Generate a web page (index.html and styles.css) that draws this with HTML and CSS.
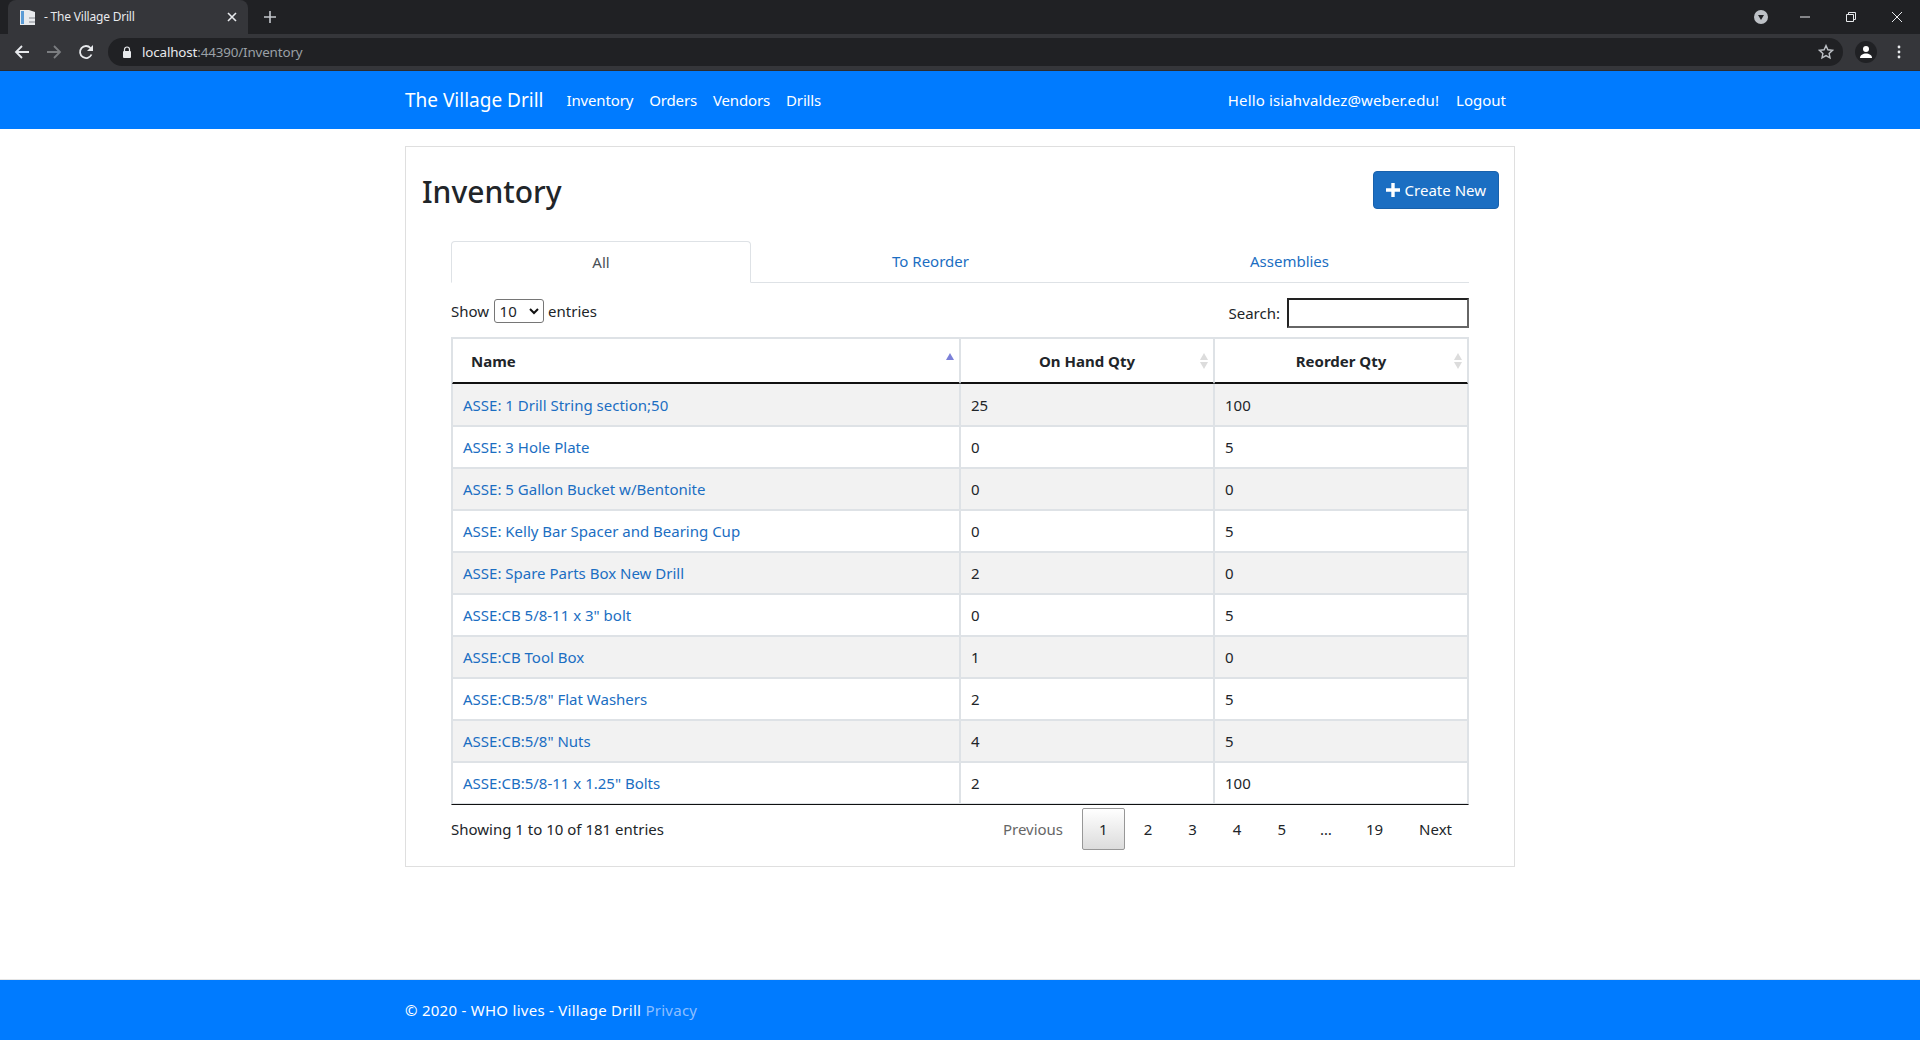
FILE: index.html
```html
<!DOCTYPE html>
<html lang="en">
<head>
<meta charset="utf-8">
<title>The Village Drill</title>
<link rel="stylesheet" href="styles.css">
</head>
<body>
<div class="chrome">
  <div class="tabstrip">
    <div class="tab">
      <svg class="favicon" width="16" height="16" viewBox="0 0 16 16"><path d="M0 1h9l6 2v13H0z" fill="#e8eaed"/><path d="M1 2h3v13H1z" fill="#5b9bd5"/><path d="M9 8h6v2H9zM9 12h6v2H9z" fill="#b5b8bd"/></svg>
      <span class="tab-title">- The Village Drill</span>
      <svg class="tab-x" width="10" height="10" viewBox="0 0 10 10"><path d="M1 1l8 8M9 1l-8 8" stroke="#e8eaed" stroke-width="1.6"/></svg>
    </div>
    <svg class="newtab" width="12" height="12" viewBox="0 0 12 12"><path d="M6 0v12M0 6h12" stroke="#c4c7cc" stroke-width="1.6"/></svg>
    <div class="spacer"></div>
    <svg class="media" width="14" height="14" viewBox="0 0 14 14"><circle cx="7" cy="7" r="7" fill="#bdc1c6"/><path d="M4 5h6L7 10z" fill="#202124"/></svg>
    <div class="winbtns">
      <svg width="46" height="12" viewBox="0 0 46 12"><path d="M18 6h10" stroke="#e8eaed"/></svg>
      <svg width="46" height="12" viewBox="0 0 46 12"><path d="M18.500 3.500h7v7h-7zM20.500 3.500v-2h7v7h-2" fill="none" stroke="#e8eaed"/></svg>
      <svg width="46" height="12" viewBox="0 0 46 12"><path d="M18 1l10 10M28 1L18 11" stroke="#e8eaed"/></svg>
    </div>
  </div>
  <div class="toolbar">
    <svg class="tb-icon" width="16" height="16" viewBox="0 0 16 16"><path d="M15 8H2M8 2L2 8l6 6" fill="none" stroke="#e8eaed" stroke-width="1.8"/></svg>
    <svg class="tb-icon" width="16" height="16" viewBox="0 0 16 16"><path d="M1 8h13M8 2l6 6-6 6" fill="none" stroke="#7b7d80" stroke-width="1.8"/></svg>
    <svg class="tb-icon" width="16" height="16" viewBox="0 0 16 16"><path d="M13.500 10.500A6 6 0 1 1 12.500 4" fill="none" stroke="#e8eaed" stroke-width="1.8"/><path d="M15 1v6H9z" fill="#e8eaed"/></svg>
    <div class="omnibox">
      <svg class="lock" width="10" height="12" viewBox="0 0 10 12"><path d="M2.500 5V3.500a2.500 2.500 0 0 1 5 0V5" fill="none" stroke="#e8eaed" stroke-width="1.2"/><rect x="1" y="5" width="8" height="7" rx="1" fill="#e8eaed"/></svg>
      <span class="url"><span class="url-host">localhost</span>:44390/Inventory</span>
      <div class="spacer"></div>
      <svg width="16" height="16" viewBox="0 0 16 16"><path d="M8 1.600l1.900 4.200 4.600.5-3.400 3.100.9 4.500L8 11.600l-4 2.300.9-4.500L1.500 6.300l4.600-.5z" fill="none" stroke="#bdc1c6" stroke-width="1.4"/></svg>
    </div>
    <div class="avatar"><svg width="14" height="14" viewBox="0 0 14 14"><circle cx="7" cy="4" r="3" fill="#fff"/><path d="M1 13c0-3 3-4.500 6-4.500s6 1.500 6 4.500z" fill="#fff"/></svg></div>
    <svg class="dots" width="4" height="14" viewBox="0 0 4 14"><circle cx="2" cy="2" r="1.400" fill="#e8eaed"/><circle cx="2" cy="7" r="1.400" fill="#e8eaed"/><circle cx="2" cy="12" r="1.400" fill="#e8eaed"/></svg>
  </div>
</div>

<div class="page">
  <nav class="navbar">
    <div class="container nav-inner">
      <a class="brand">The Village Drill</a>
      <a class="nav-link">Inventory</a>
      <a class="nav-link">Orders</a>
      <a class="nav-link">Vendors</a>
      <a class="nav-link">Drills</a>
      <div class="spacer"></div>
      <span class="hello">Hello isiahvaldez@weber.edu!</span>
      <a class="logout">Logout</a>
    </div>
  </nav>

  <main class="container main">
    <section class="card">
      <header class="card-head">
        <h1>Inventory</h1>
        <a class="btn-create"><svg width="14" height="14" viewBox="0 0 14 14"><path d="M7 0v14M0 7h14" stroke="#fff" stroke-width="3.4"/></svg>Create New</a>
      </header>
      <div class="card-body">
        <ul class="tabs">
          <li class="tab-item active">All</li>
          <li class="tab-item">To Reorder</li>
          <li class="tab-item">Assemblies</li>
        </ul>
        <div class="dt-top">
          <label class="dt-length">Show <span class="fake-select">10<svg width="10" height="7" viewBox="0 0 10 7"><path d="M1 1l4 4 4-4" fill="none" stroke="#111" stroke-width="2"/></svg></span> entries</label>
          <label class="dt-search">Search:<span class="fake-input"></span></label>
        </div>
        <table class="dt">
          <colgroup><col class="c1"><col class="c2"><col class="c3"></colgroup>
          <thead>
            <tr>
              <th class="th-name">Name<span class="sort only-up"></span></th>
              <th>On Hand Qty<span class="sort both"></span></th>
              <th>Reorder Qty<span class="sort both"></span></th>
            </tr>
          </thead>
          <tbody>
            <tr><td><a>ASSE: 1 Drill String section;50</a></td><td>25</td><td>100</td></tr>
            <tr><td><a>ASSE: 3 Hole Plate</a></td><td>0</td><td>5</td></tr>
            <tr><td><a>ASSE: 5 Gallon Bucket w/Bentonite</a></td><td>0</td><td>0</td></tr>
            <tr><td><a>ASSE: Kelly Bar Spacer and Bearing Cup</a></td><td>0</td><td>5</td></tr>
            <tr><td><a>ASSE: Spare Parts Box New Drill</a></td><td>2</td><td>0</td></tr>
            <tr><td><a>ASSE:CB 5/8-11 x 3" bolt</a></td><td>0</td><td>5</td></tr>
            <tr><td><a>ASSE:CB Tool Box</a></td><td>1</td><td>0</td></tr>
            <tr><td><a>ASSE:CB:5/8" Flat Washers</a></td><td>2</td><td>5</td></tr>
            <tr><td><a>ASSE:CB:5/8" Nuts</a></td><td>4</td><td>5</td></tr>
            <tr><td><a>ASSE:CB:5/8-11 x 1.25" Bolts</a></td><td>2</td><td>100</td></tr>
          </tbody>
        </table>
        <div class="dt-bottom">
          <div class="dt-info">Showing 1 to 10 of 181 entries</div>
          <div class="pager">
            <a class="pg muted">Previous</a>
            <a class="pg current">1</a>
            <a class="pg">2</a>
            <a class="pg">3</a>
            <a class="pg">4</a>
            <a class="pg">5</a>
            <span class="pg ellipsis">…</span>
            <a class="pg">19</a>
            <a class="pg">Next</a>
          </div>
        </div>
      </div>
    </section>
  </main>

  <footer class="footer">
    <div class="container">© 2020 - WHO lives - Village Drill <a class="privacy">Privacy</a></div>
  </footer>
</div>
</body>
</html>
```

FILE: styles.css
```css
* { box-sizing: border-box; }
html, body { height: 100%; }
body {
  margin: 0;
  display: flex;
  flex-direction: column;
  height: 1040px;
  overflow: hidden;
  background: #fff;
  color: #212529;
  font-family: "Noto Sans", "Open Sans", sans-serif;
  font-size: 15px;
  line-height: 24px;
}
.spacer { flex: 1; }

/* browser chrome */
.chrome { flex: none; height: 71px; background: #35363a; }
.tabstrip { height: 34px; background: #202124; display: flex; align-items: center; padding-left: 8px; }
.tab {
  width: 240px; height: 34px; background: #35363a; border-radius: 8px 8px 0 0;
  display: flex; align-items: center; padding: 0 11px 0 12px; color: #e8eaed;
  font-size: 12px; letter-spacing: -0.2px;
}
.favicon { margin-right: 8px; }
.tab-title { flex: 1; }
.newtab { margin-left: 16px; }
.media { margin-right: 14px; }
.winbtns { display: flex; width: 138px; }
.toolbar { height: 37px; display: flex; align-items: center; border-bottom: 1px solid #2b2c2f; padding: 0 0 0 14px; }
.tb-icon { margin-right: 16px; }
.omnibox {
  width: 1735px; height: 28px; margin-left: -2px; border-radius: 14px; background: #202124;
  display: flex; align-items: center; padding: 0 9px 0 14px;
}
.lock { margin-right: 10px; }
.url { color: #9aa0a6; font-size: 13.4px; letter-spacing: -0.15px; }
.url-host { color: #e8eaed; }
.avatar {
  width: 22px; height: 22px; margin-left: 12px; border-radius: 50%; background: #202124;
  display: flex; align-items: center; justify-content: center;
}
.dots { margin-left: 20px; }

/* page */
.page { flex: 1; display: flex; flex-direction: column; min-height: 0; }
.container { width: 1140px; margin: 0 auto; padding: 0 15px; }
.navbar { flex: none; height: 58px; background: #007bff; color: #fff; display: flex; align-items: center; }
.nav-inner { display: flex; align-items: center; }
.brand { font-size: 19px; margin-right: 23px; }
.nav-link { margin-right: 16px; letter-spacing: -0.15px; }
.hello { margin-right: 17px; letter-spacing: 0.13px; }
.logout { margin-right: 9px; }

.main { flex: 1; padding-top: 17px; }
.card { height: 721px; border: 1px solid #dfdfdf; padding: 0 15px 0 16px; }
.card-head { display: flex; justify-content: space-between; align-items: flex-start; padding-top: 24px; height: 94px; }
.card-head h1 { margin: 2px 0 0; font-size: 30px; font-weight: 500; line-height: 38px; }
.btn-create {
  display: flex; align-items: center; gap: 5px; height: 38px; padding: 0 12px;
  color: #fff; background: #1b6ec2; border: 1px solid #1861ac; border-radius: 4px;
}
.card-body { padding: 0 30px 0 29px; }
.tabs { list-style: none; margin: 0; padding: 0; display: flex; height: 42px; border-bottom: 1px solid #dee2e6; }
.tab-item { flex: none; width: 359px; text-align: center; line-height: 40px; color: #1b6ec2; }
.tab-item.active {
  width: 300px; height: 42px; color: #495057; background: #fff;
  border: 1px solid #dee2e6; border-bottom-color: #fff; border-radius: 4px 4px 0 0;
}
.dt-top { display: flex; justify-content: space-between; align-items: flex-start; height: 54px; padding-top: 15px; }
.dt-length { display: flex; align-items: center; gap: 4.5px; height: 24px; margin-top: 1px; }
.fake-select {
  display: flex; align-items: center; justify-content: space-between;
  width: 50px; height: 24px; padding: 0 4px 0 5px; border: 1px solid #767676; border-radius: 3px;
}
.dt-search { display: flex; align-items: center; gap: 7px; height: 30px; }
.fake-input { width: 182px; height: 30px; border: 2px solid; border-color: #222 #666 #666 #222; }

.dt { width: 1016px; table-layout: fixed; border-collapse: separate; border-spacing: 0; border: 1px solid #dee2e6; border-bottom-color: #111; }
.c1 { width: 508px; }
.c2 { width: 254px; }
.c3 { width: 254px; }
.dt th, .dt td { border: 1px solid #dee2e6; padding: 8px 10px; height: 42px; }
.dt th { position: relative; height: 46px; font-weight: 700; text-align: center; border-bottom: 2px solid #111; }
.dt th.th-name { text-align: left; padding-left: 18px; }
.dt tbody tr:nth-child(odd) { background: #f2f2f2; }
.dt tbody tr:first-child td { border-top: 0; }
.dt a { color: #1b6ec2; }
.sort { position: absolute; right: 5px; top: 14px; width: 8px; height: 16px; }
.sort::before, .sort::after { content: ""; position: absolute; left: 0; border-left: 4px solid transparent; border-right: 4px solid transparent; }
.sort::before { top: 0; border-bottom: 7px solid #dcdcdc; }
.sort::after { bottom: 0; border-top: 7px solid #dcdcdc; }
.only-up { top: 14px; }
.only-up::before { border-bottom-color: #7b80d8; }
.only-up::after { display: none; }

.dt-bottom { display: flex; justify-content: space-between; padding-top: 3px; }
.dt-info { padding-top: 9px; }
.pager { display: flex; }
.pg { display: block; height: 42px; padding: 8px 16px; margin-left: 2px; border: 1px solid transparent; border-radius: 2px; }
.pg.muted { color: #666; }
.pg.current { border-color: #979797; background: linear-gradient(#fff, #dcdcdc); }
.pg.ellipsis { padding: 8px 14px; }

.footer { flex: none; height: 61px; background: #007bff; color: #fff; display: flex; align-items: center; border-top: 1px solid #e5e5e5; letter-spacing: 0.27px; }
.privacy { color: #8ebfff; }
```
